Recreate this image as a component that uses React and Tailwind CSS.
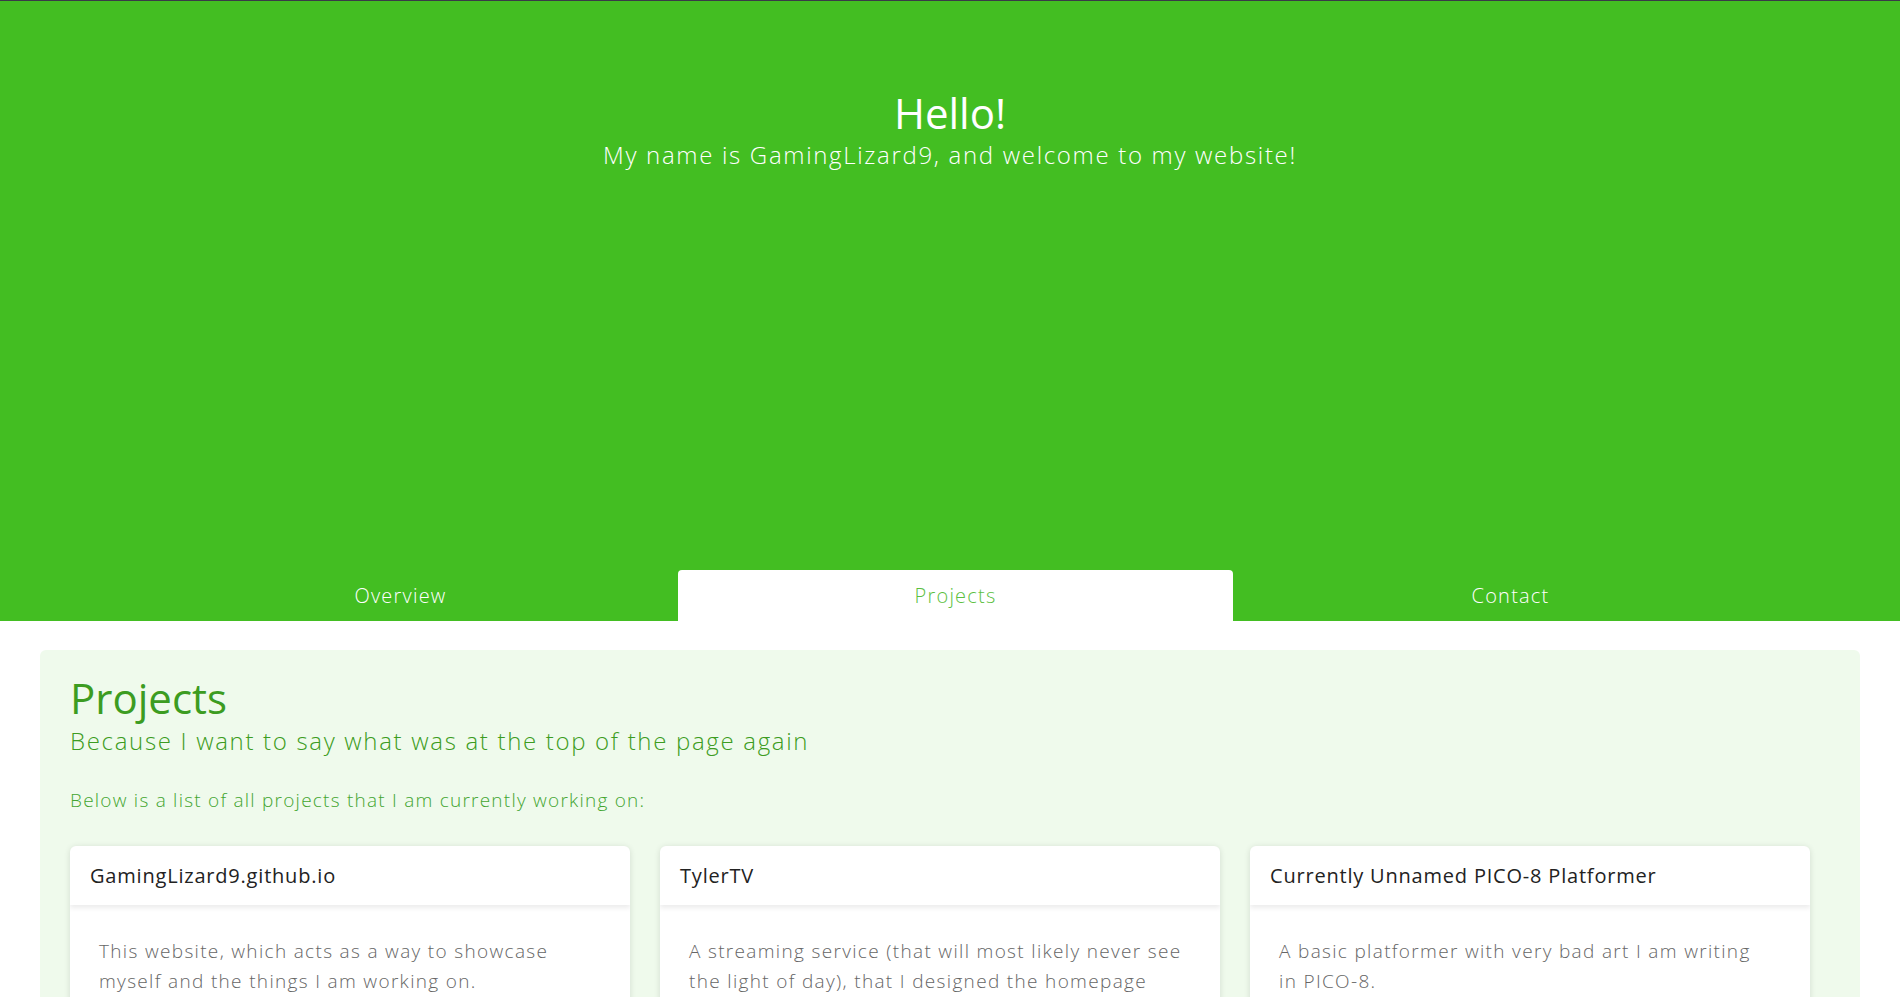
import React, { useState } from 'react';

const tabs = ['Overview', 'Projects', 'Contact'];

const projects = [
  {
    title: 'GamingLizard9.github.io',
    text: 'This website, which acts as a way to showcase myself and the things I am working on.',
  },
  {
    title: 'TylerTV',
    text: 'A streaming service (that will most likely never see the light of day), that I designed the homepage for.',
  },
  {
    title: 'Currently Unnamed PICO-8 Platformer',
    text: 'A basic platformer with very bad art I am writing in PICO-8.',
  },
];

const ProjectCard = ({ title, text }) => (
  <div className="bg-white rounded-md shadow-[0_1px_6px_rgba(0,0,0,0.12)] overflow-hidden">
    <div className="h-[59px] px-5 flex items-center text-[20px] tracking-[0.04em] text-[#222] shadow-[0_3px_5px_rgba(0,0,0,0.08)]">
      {title}
    </div>
    <p className="pl-[29px] pr-[38px] pt-[31px] pb-8 text-[19px] leading-[30px] tracking-[0.07em] font-light text-[#666]">
      {text}
    </p>
  </div>
);

const App = () => {
  const [active, setActive] = useState('Projects');

  return (
    <div className="w-[1900px] min-h-screen bg-white border-t border-[#3a3a48] font-['Open_Sans',sans-serif]">
      <header className="h-[620px] bg-[#43be22] flex flex-col text-white">
        <div className="pt-[87px] text-center">
          <h1 className="text-[42px] leading-[50px] font-normal">Hello!</h1>
          <p className="mt-px text-[24px] leading-[32px] tracking-[0.07em] font-light">
            My name is GamingLizard9, and welcome to my website!
          </p>
        </div>

        <nav className="mt-auto flex pl-[123px]">
          {tabs.map((tab) => (
            <button
              key={tab}
              onClick={() => setActive(tab)}
              className={
                tab === active
                  ? 'w-[555px] h-[51px] flex items-center justify-center text-[20px] tracking-[0.06em] font-light bg-white rounded-t-[4px] text-[#5cbf3f]'
                  : 'w-[555px] h-[51px] flex items-center justify-center text-[20px] tracking-[0.06em] font-light text-white'
              }
            >
              {tab}
            </button>
          ))}
        </nav>
      </header>

      {/* Projects tab content */}
      <section className="mx-10 mt-[29px] bg-[#effaec] rounded-md px-[30px] pt-[23px] pb-10">
        <h2 className="text-[42px] leading-[50px] font-normal text-[#3c9c21]">Projects</h2>
        <p className="mt-0.5 text-[24px] leading-[32px] tracking-[0.07em] font-light text-[#3c9c21]">
          Because I want to say what was at the top of the page again
        </p>
        <p className="mt-[29px] text-[19px] leading-[28px] tracking-[0.065em] font-light text-[#43a530]">
          Below is a list of all projects that I am currently working on:
        </p>

        <div className="mt-8 grid grid-cols-[560px_560px_560px] gap-[30px] items-start">
          {projects.map((p) => (
            <ProjectCard key={p.title} title={p.title} text={p.text} />
          ))}
        </div>
      </section>
    </div>
  );
};

export default App;
